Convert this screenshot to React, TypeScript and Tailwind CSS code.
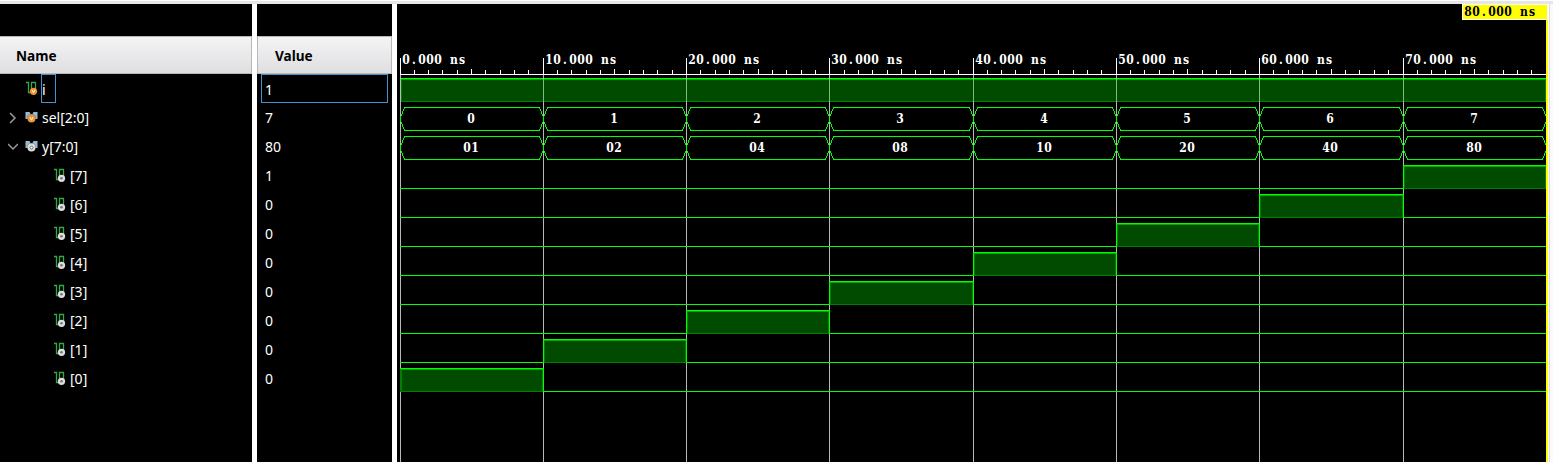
import React from 'react';

const LINES = [400, 543, 686, 829, 973, 1116, 1259, 1403, 1546];
const X0 = 397;
const SEL = ['0', '1', '2', '3', '4', '5', '6', '7'];
const Y = ['01', '02', '04', '08', '10', '20', '40', '80'];
const BITS = [7, 6, 5, 4, 3, 2, 1, 0];

const CELL = 8;
const ADVANCE: Record<string, number> = { '.': 4.2, n: 7.8, s: 6.2, ' ': 4 };

function MonoText({ x, y, text, fill }: { x: number; y: number; text: string; fill: string }) {
  const xs = text
    .split('')
    .map((c, i) => x + i * CELL + (CELL - (ADVANCE[c] ?? 7.5)) / 2)
    .join(' ');
  return (
    <text x={xs} y={y} fill={fill} className="font-['DejaVu_Serif_Condensed','DejaVu_Serif',serif] text-[12px] font-bold [font-stretch:condensed]">
      {text}
    </text>
  );
}

function ScalarIcon({ output }: { output?: boolean }) {
  return (
    <svg width="12" height="14" viewBox="0 0 12 14" fill="none" className="shrink-0 -translate-y-px">
      <path d="M0 1.5H2.5V11.5H5.5V1.5H9.5V8" stroke="#35a64a" strokeWidth="1.3" />
      <circle cx="7.5" cy="10.3" r="3.6" fill={output ? '#dedede' : '#f0932b'} />
      {output ? (
        <circle cx="7.5" cy="10.3" r="1.3" fill="#777" />
      ) : (
        <path d="M6 8.9L7.5 11.7L9 8.9" stroke="#fff" strokeWidth="1" />
      )}
    </svg>
  );
}

function BusIcon({ output }: { output?: boolean }) {
  return (
    <svg width="13" height="13" viewBox="0 0 13 13" fill="none" className="shrink-0">
      <path d="M0.5 1H4.5L5.5 3H7.5L8.5 1H12.5V8H0.5Z" fill="#93bdd3" />
      <circle cx="6.5" cy="7.6" r="4.6" fill="#000" fillOpacity="0.35" />
      <circle cx="6.5" cy="7.6" r="4" fill={output ? '#dedede' : '#f0932b'} />
      {output ? (
        <circle cx="6.5" cy="7.6" r="1.5" fill="#eee" stroke="#777" />
      ) : (
        <path d="M5 6L6.5 9.2L8 6" stroke="#fff" strokeWidth="1" />
      )}
    </svg>
  );
}

function Header({ children, pad }: { children: string; pad: string }) {
  return (
    <div className={`mt-8 flex h-[38px] items-center border-y border-r border-[#b8b8b8] bg-linear-to-b from-[#f4f4f4] to-[#dfdfe2] pt-0.5 text-[13.6px] font-bold text-black ${pad}`}>
      {children}
    </div>
  );
}

function Waves() {
  return (
    <svg width="1149" height="458" viewBox="397 4 1149 458" shapeRendering="crispEdges" className="block">
      <rect x={X0} y="4" width="1149" height="458" fill="#000" />
      <rect x="400" y="78" width="1146" height="24" fill="#008000" />
      <rect x="402" y="80" width="1143" height="21" fill="#004b00" />
      <rect x="400" y="78" width="1146" height="1" fill="#00ff00" />
      <rect x="401" y="79" width="1145" height="1" fill="#00a800" />
      {LINES.slice(0, 8).map((x, i) => (
        <g key={x}>
          <rect x={x} y="75" width="1" height="387" fill="#b8b8b8" />
          {i > 0 && <rect x={x} y="79" width="1" height="23" fill="#80b880" />}
          <rect x={x} y="58" width="1" height="17" fill="#fff" />
          {[1, 2, 3, 4, 5, 6, 7, 8, 9].map((k) => (
            <rect key={k} x={Math.floor(400 + (i + k / 10) * 143.25)} y={k === 5 ? 69 : 70} width="1" height="5" fill="#fff" />
          ))}
          <MonoText x={x + 2} y={64} text={`${i === 0 ? '0' : i * 10}.000 ns`} fill="#fff" />
        </g>
      ))}
      <rect x="400" y="74" width="1146" height="1" fill="#fff" />
      {[SEL, Y].map((labels, r) =>
        labels.map((label, i) => {
          const a = LINES[i] + 0.5;
          const b = LINES[i + 1] + 0.5;
          const t = 107.5 + r * 29;
          return (
            <g key={`${r}-${i}`}>
              <path d={`M${a} ${t + 12}V${t + 10}L${a + 4} ${t}H${b - 4}L${b} ${t + 10}V${t + 13}L${b - 4} ${t + 23}H${a + 4}L${a} ${t + 13}Z`} fill="none" stroke="#00ff00" />
              <MonoText x={Math.floor((a + b) / 2 - label.length * 4 - 1)} y={t + 15.5} text={label} fill="#fff" />
            </g>
          );
        }),
      )}
      {BITS.map((bit, r) => {
        const t = 165 + r * 29;
        const a = LINES[bit];
        const b = LINES[bit + 1];
        return (
          <g key={bit}>
            <rect x="400" y={t + 23} width={a - 400} height="1" fill="#00ff00" />
            <rect x={a} y={t} width={b - a + 1} height="24" fill="#008000" />
            <rect x={a + 2} y={t + 2} width={b - a - 3} height="21" fill="#004b00" />
            <rect x={a + 1} y={t + 1} width={b - a - 1} height="1" fill="#00a800" />
            <rect x={a} y={t} width={b - a + 1} height="1" fill="#00ff00" />
            {bit > 0 && <rect x={a} y={t} width="1" height="24" fill="#00ff00" />}
            {bit < 7 && <rect x={b} y={t} width="1" height="24" fill="#00ff00" />}
            <rect x={b} y={t + 23} width={1546 - b} height="1" fill="#00ff00" />
          </g>
        );
      })}
    </svg>
  );
}

export default function App() {
  return (
    <div className="flex h-[462px] w-[1553px] flex-col overflow-hidden bg-white font-['Noto_Sans',sans-serif] text-[14px] text-white">
      <div className="mt-px h-[3px] shrink-0 bg-[#e6e6e6]" />
      <div className="flex h-[458px]">
        <section className="w-[252px] bg-black">
          <Header pad="pl-4">Name</Header>
          <div className="flex h-[29px] items-center pl-[26px]">
            <ScalarIcon />
            <span className="ml-[3px] flex h-[29px] w-[15px] items-center border border-[#4593d0] pt-px">i</span>
          </div>
          <div className="flex h-[29px] items-center pl-2">
            <svg width="10" height="14" viewBox="0 0 10 14" fill="none" stroke="#999" strokeWidth="1.5"><path d="M2 2L7 7L2 12" /></svg>
            <span className="mr-1 ml-[7px]"><BusIcon /></span>
            sel[2:0]
          </div>
          <div className="flex h-[29px] items-center pl-2">
            <svg width="10" height="14" viewBox="0 0 10 14" fill="none" stroke="#999" strokeWidth="1.5"><path d="M0 4L5 9L10 4" /></svg>
            <span className="mr-1 ml-[7px]"><BusIcon output /></span>
            y[7:0]
          </div>
          {BITS.map((b) => (
            <div key={b} className="flex h-[29px] items-center gap-1 pl-[54px]">
              <ScalarIcon output />
              <span>[{b}]</span>
            </div>
          ))}
        </section>
        <section className="ml-[5px] w-[135px] bg-black">
          <Header pad="border-l pl-[17px]">Value</Header>
          <div className="ml-1 flex h-[29px] w-[127px] items-center border border-[#4593d0] pt-px pl-[3px]">1</div>
          {['7', '80', '1', '0', '0', '0', '0', '0', '0', '0'].map((v, i) => (
            <div key={i} className="flex h-[29px] items-center pl-2">{v}</div>
          ))}
        </section>
        <section className="relative ml-[5px] flex w-[1151px] bg-black">
          <Waves />
          <div className="w-0.5 bg-[#ffff00]" />
          <div className="absolute top-0 right-0 h-4 w-[86px] border border-white bg-[#ffff00]">
            <svg width="84" height="14" className="block">
              <MonoText x={1} y={11} text="80.000 ns" fill="#000" />
            </svg>
          </div>
        </section>
        <div className="ml-px flex-1 border-l border-[#dcdcdc] bg-[#fafafa]" />
      </div>
    </div>
  );
}
